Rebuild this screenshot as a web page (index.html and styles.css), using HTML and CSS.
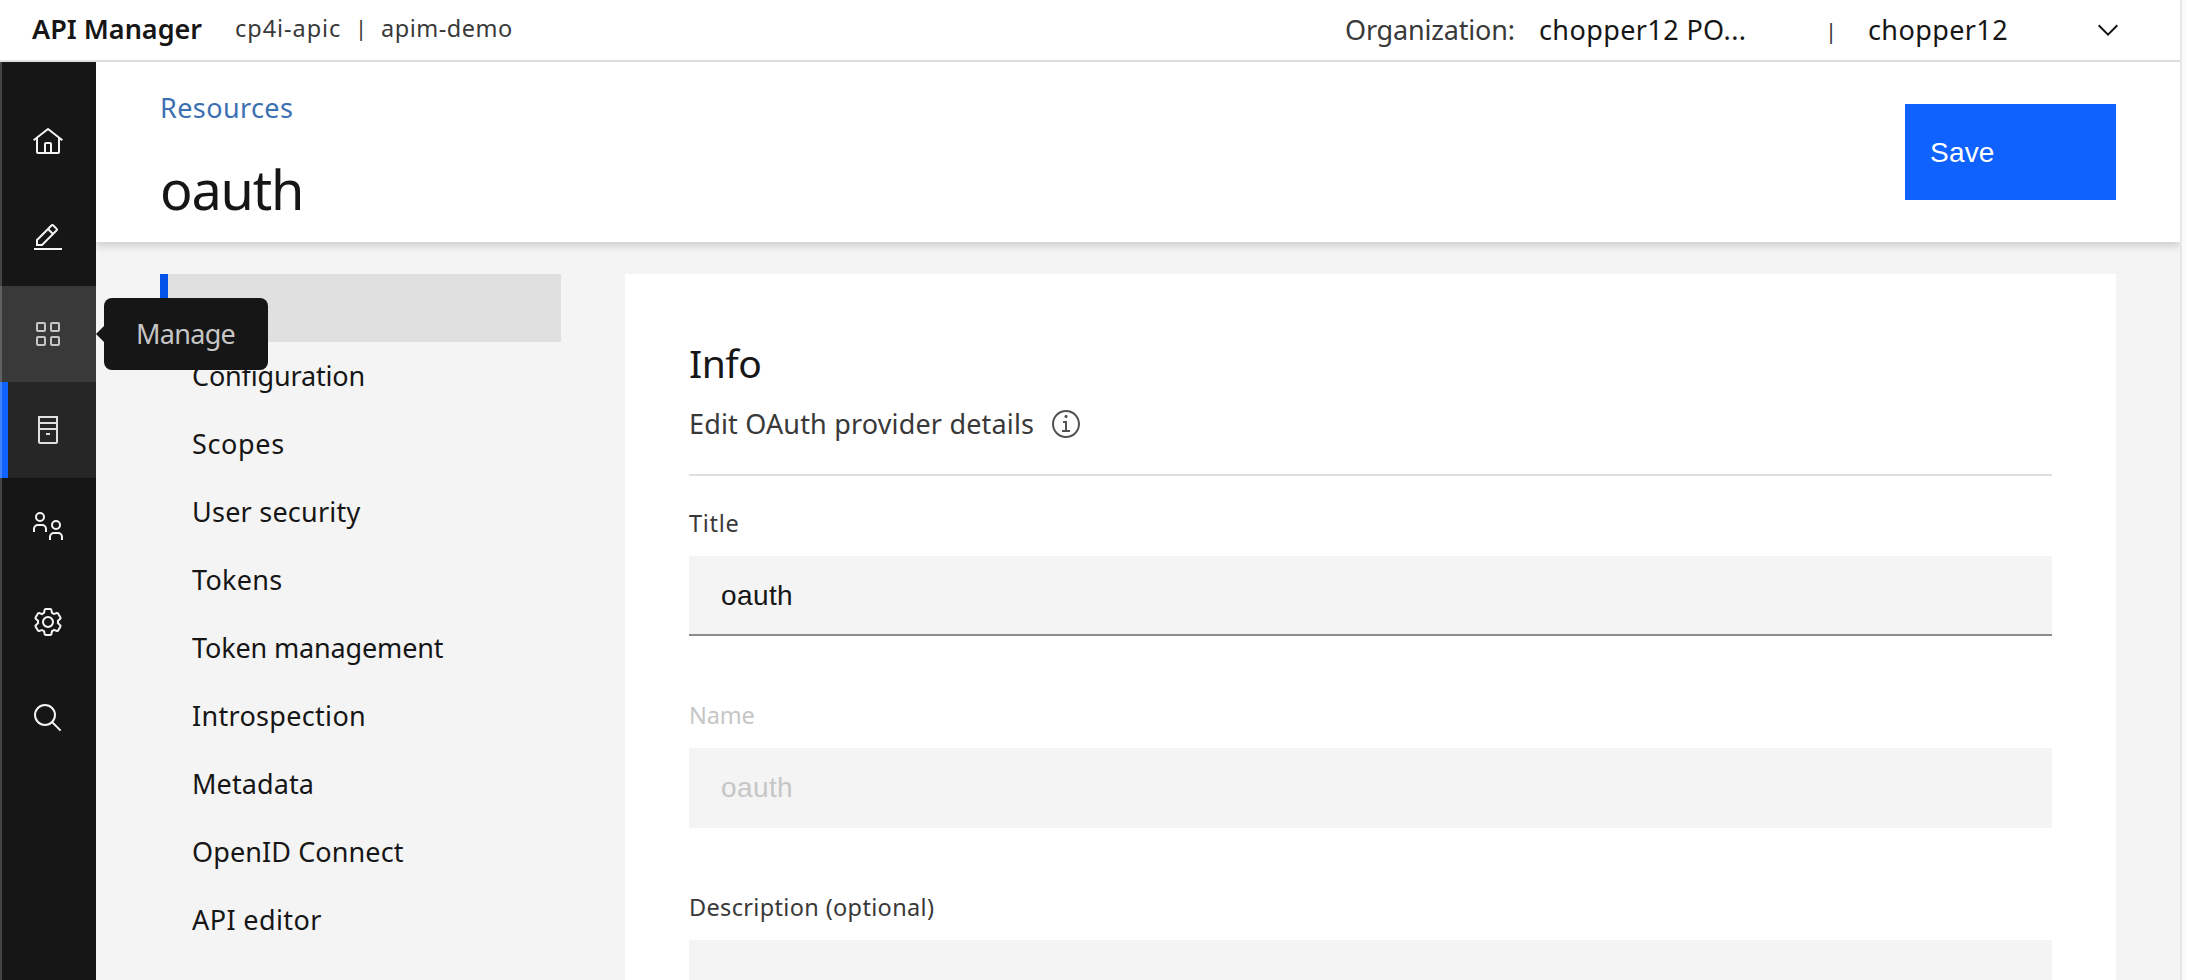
FILE: index.html
```html
<!DOCTYPE html>
<html lang="en">
<head>
<meta charset="utf-8">
<title>API Manager</title>
<link rel="stylesheet" href="styles.css">
</head>
<body>
<div class="window">
  <header class="topbar">
    <div class="product">API Manager</div>
    <div class="crumb instance">cp4i-apic</div>
    <div class="crumb bar">|</div>
    <div class="crumb server">apim-demo</div>
    <div class="account">
      <div class="org-label">Organization:</div>
      <div class="org-name">chopper12 PO...</div>
      <div class="crumb bar account-bar">|</div>
      <div class="user">chopper12</div>
      <svg class="chevron" viewBox="0 0 16 16"><path d="M8 11 3 6 3.7 5.3 8 9.6 12.3 5.3 13 6z"/></svg>
    </div>
  </header>

  <div class="shell">
    <nav class="rail">
      <a class="rail-item"><svg class="icon" viewBox="0 0 32 32"><path d="M16.6123,2.2138a1.01,1.01,0,0,0-1.2427,0L1,13.4194l1.2427,1.5717L4,13.6208V26a2.0041,2.0041,0,0,0,2,2H26a2.0037,2.0037,0,0,0,2-2V13.63L29.7573,15,31,13.4282ZM18,26H14V18h4Zm2,0V18a2.0023,2.0023,0,0,0-2-2H14a2.002,2.002,0,0,0-2,2v8H6V12.0615l10-7.79,10,7.8005V26Z"/></svg></a>
      <a class="rail-item"><svg class="icon" viewBox="0 0 32 32"><path d="M2 26H30V28H2zM25.4 9c.8-.8.8-2 0-2.8l-3.6-3.6c-.8-.8-2-.8-2.8 0L4 17.6V24h6.4L25.4 9zM20.4 4L24 7.6l-3 3L17.4 7 20.4 4zM6 22v-3.6l10-10 3.6 3.6-10 10H6z"/></svg></a>
      <a class="rail-item hovered"><svg class="icon line" viewBox="0 0 32 32"><rect x="5" y="5" width="8" height="8" rx="1"/><rect x="19" y="5" width="8" height="8" rx="1"/><rect x="5" y="19" width="8" height="8" rx="1"/><rect x="19" y="19" width="8" height="8" rx="1"/></svg><span class="tooltip">Manage</span></a>
      <a class="rail-item current"><svg class="icon line" viewBox="0 0 32 32"><path d="M7 3H25V28a1 1 0 0 1-1 1H8a1 1 0 0 1-1-1ZM7 9H25M7 15H25M14 20H18"/></svg></a>
      <a class="rail-item"><svg class="icon line" viewBox="0 0 32 32"><circle cx="8" cy="7" r="4"/><path d="M2 22v-3a4 4 0 0 1 4-4h4a4 4 0 0 1 4 4v3"/><circle cx="24" cy="15" r="4"/><path d="M18 30v-3a4 4 0 0 1 4-4h4a4 4 0 0 1 4 4v3"/></svg></a>
      <a class="rail-item"><svg class="icon" viewBox="0 0 32 32"><path d="M27 16.76c0-.25 0-.5 0-.76s0-.51 0-.77l1.92-1.68A2 2 0 0 0 29.3 11L26.94 7a2 2 0 0 0-1.73-1 2 2 0 0 0-.64.1l-2.43.82a11.35 11.35 0 0 0-1.31-.75l-.51-2.52a2 2 0 0 0-2-1.61H13.64a2 2 0 0 0-2 1.61l-.51 2.52a11.48 11.48 0 0 0-1.32.75L7.43 6.06A2 2 0 0 0 6.79 6 2 2 0 0 0 5.06 7L2.7 11a2 2 0 0 0 .41 2.51L5 15.24c0 .25 0 .5 0 .76s0 .51 0 .77L3.11 18.45A2 2 0 0 0 2.7 21L5.06 25a2 2 0 0 0 1.73 1 2 2 0 0 0 .64-.1l2.43-.82a11.35 11.35 0 0 0 1.31.75l.51 2.52a2 2 0 0 0 2 1.61h4.72a2 2 0 0 0 2-1.61l.51-2.52a11.48 11.48 0 0 0 1.32-.75l2.42.82a2 2 0 0 0 .64.1 2 2 0 0 0 1.73-1L29.3 21a2 2 0 0 0-.41-2.51ZM25.21 24l-3.43-1.16a8.86 8.86 0 0 1-2.71 1.57L18.36 28H13.64l-.71-3.55a9.36 9.36 0 0 1-2.7-1.57L6.79 24 4.43 20l2.72-2.4a8.9 8.9 0 0 1 0-3.13L4.43 12 6.79 8l3.43 1.16a8.86 8.86 0 0 1 2.71-1.57L13.64 4h4.72l.71 3.55a9.36 9.36 0 0 1 2.7 1.57L25.21 8 27.57 12l-2.72 2.4a8.9 8.9 0 0 1 0 3.13L27.57 20Z"/><path d="M16 22a6 6 0 1 1 6-6A5.94 5.94 0 0 1 16 22Zm0-10a3.91 3.91 0 0 0-4 4 3.91 3.91 0 0 0 4 4 3.91 3.91 0 0 0 4-4A3.91 3.91 0 0 0 16 12Z"/></svg></a>
      <a class="rail-item"><svg class="icon line" viewBox="0 0 32 32"><circle cx="13" cy="13" r="10"/><path d="M20.3 20.3 28.6 28.6"/></svg></a>
    </nav>

    <main class="content">
      <div class="page-header">
        <div>
          <a class="back">Resources</a>
          <h1 class="page-title">oauth</h1>
        </div>
        <button class="save">Save</button>
      </div>

      <div class="columns">
        <ul class="sections">
          <li class="selected">Info</li>
          <li class="t-configuration">Configuration</li>
          <li class="t-scopes">Scopes</li>
          <li class="t-user">User security</li>
          <li class="t-tokens">Tokens</li>
          <li class="t-management">Token management</li>
          <li class="t-introspection">Introspection</li>
          <li class="t-metadata">Metadata</li>
          <li class="t-openid">OpenID Connect</li>
          <li class="t-editor">API editor</li>
        </ul>

        <section class="panel">
          <h2 class="panel-title">Info</h2>
          <div class="panel-sub">
            <span>Edit OAuth provider details</span>
            <svg class="info-icon" viewBox="0 0 16 16"><path d="M8.5 11 8.5 6.5 6.5 6.5 6.5 7.5 7.5 7.5 7.5 11 6 11 6 12 10 12 10 11z"/><path d="M8 3.5c-.4 0-.8.3-.8.8S7.6 5 8 5c.4 0 .8-.3.8-.8S8.4 3.5 8 3.5z"/><path d="M8 15c-3.9 0-7-3.1-7-7s3.1-7 7-7 7 3.1 7 7-3.1 7-7 7zM8 2C4.7 2 2 4.7 2 8s2.7 6 6 6 6-2.7 6-6-2.7-6-6-6z"/></svg>
          </div>
          <div class="field first">
            <label class="t-title">Title</label>
            <input class="input" value="oauth">
          </div>
          <div class="field disabled">
            <label class="t-name">Name</label>
            <input class="input" value="oauth" disabled>
          </div>
          <div class="field">
            <label>Description (optional)</label>
            <input class="input">
          </div>
        </section>
      </div>
    </main>
  </div>
</div>
</body>
</html>
```
FILE: styles.css
```css
* {
  box-sizing: border-box;
}

body {
  margin: 0;
  height: 980px;
  overflow: hidden;
  background: #fafafa;
  color: #161616;
  font: 27px/36px "Noto Sans", "Open Sans", sans-serif;
  white-space: nowrap;
}

.window {
  width: 2182px;
  height: 980px;
  display: flex;
  flex-direction: column;
  overflow: hidden;
  border-right: 2px solid #e6e6e6;
}

/* Top bar */
.topbar {
  flex: none;
  height: 62px;
  display: flex;
  align-items: flex-start;
  padding: 0 56px 0 32px;
  background: #fff;
  border-bottom: 2px solid #e0e0e0;
}

.product {
  width: 203px;
  line-height: 57px;
  font-weight: 600;
}

.crumb {
  font-size: 23.5px;
  line-height: 57px;
  color: #393939;
}

.instance {
  width: 110px;
  letter-spacing: 0.95px;
}

.bar {
  width: 32px;
  font-size: 22px;
  line-height: 55px;
  text-align: center;
}

.server {
  margin-left: 4px;
  letter-spacing: 0.5px;
}

.account {
  display: flex;
  margin-left: auto;
  line-height: 59px;
}

.org-label {
  width: 194px;
  color: #393939;
  letter-spacing: -0.18px;
}

.org-name {
  width: 276px;
  letter-spacing: 0.39px;
}

.account-bar {
  line-height: 60px;
}

.user {
  width: 224px;
  margin-left: 21px;
  letter-spacing: 0.39px;
}

.chevron {
  width: 32px;
  height: 32px;
  margin-top: 14px;
  fill: #161616;
}

/* Icon rail */
.shell {
  flex: 1;
  display: flex;
  min-height: 0;
}

.rail {
  position: relative;
  z-index: 2;
  flex: none;
  width: 96px;
  padding-top: 32px;
  background: #161616;
}

.rail::after {
  content: "";
  position: absolute;
  top: 0;
  left: 0;
  width: 2px;
  height: 100%;
  background: rgba(255, 255, 255, 0.2);
}

.rail-item {
  position: relative;
  display: flex;
  align-items: center;
  justify-content: center;
  height: 96px;
  color: #f4f4f4;
}

.rail-item.hovered {
  background: #393939;
  color: #c6c6c6;
}

.rail-item.current {
  background: #262626;
  color: #e0e0e0;
  box-shadow: inset 8px 0 #0f62fe;
}

.icon {
  width: 32px;
  height: 32px;
  fill: currentColor;
}

.icon.line {
  fill: none;
  stroke: currentColor;
  stroke-width: 2;
}

.tooltip {
  position: absolute;
  left: 104px;
  top: 12px;
  width: 164px;
  height: 72px;
  padding-left: 32px;
  border-radius: 8px;
  background: #161616;
  color: #c6c6c6;
  line-height: 71px;
  letter-spacing: -0.7px;
}

.tooltip::before {
  content: "";
  position: absolute;
  left: -8px;
  top: 28px;
  border: solid transparent;
  border-width: 8px 8px 8px 0;
  border-right-color: #161616;
}

/* Page header */
.content {
  flex: 1;
  display: flex;
  flex-direction: column;
  min-width: 0;
  background: #f4f4f4;
}

.page-header {
  position: relative;
  flex: none;
  display: flex;
  justify-content: space-between;
  height: 180px;
  padding: 28px 64px 0;
  background: #fff;
  box-shadow: 0 4px 8px rgba(0, 0, 0, 0.16);
}

.back {
  display: block;
  color: #3d70b2;
  letter-spacing: 0.4px;
}

.page-title {
  margin: 31px 0 0;
  font-size: 54px;
  font-weight: 400;
  line-height: 64px;
  letter-spacing: -1.2px;
}

.save {
  width: 211px;
  height: 96px;
  margin-top: 14px;
  padding: 1px 0 0 25px;
  border: 0;
  background: #0f62fe;
  color: #fff;
  font: 28px/95px "Liberation Sans", Arial, sans-serif;
  letter-spacing: 0.2px;
  text-align: left;
}

/* Section list */
.columns {
  flex: 1;
  display: flex;
  align-items: flex-start;
  gap: 64px;
  padding: 32px 64px 0;
}

.sections {
  flex: none;
  width: 401px;
  margin: 0;
  padding: 0;
  list-style: none;
}

.sections li {
  height: 68px;
  padding-left: 32px;
  line-height: 67px;
}

.sections .selected {
  padding-left: 24px;
  border-left: 8px solid #0353e9;
  background: #e0e0e0;
  line-height: 69px;
}

.t-configuration { letter-spacing: -0.16px; }
.t-scopes { letter-spacing: 0.65px; }
.t-user { letter-spacing: 0.23px; }
.t-tokens { letter-spacing: 0.3px; }
.t-management { letter-spacing: -0.15px; }
.t-introspection { letter-spacing: 0.31px; }
.t-metadata { letter-spacing: 0.1px; }
.t-openid { letter-spacing: 0.1px; }
.t-editor { letter-spacing: 0.4px; }

/* Form panel */
.panel {
  flex: 1;
  height: 760px;
  padding: 63px 64px 0;
  background: #fff;
}

.panel-title {
  margin: 0;
  font-size: 39px;
  font-weight: 400;
  line-height: 52px;
  letter-spacing: -0.5px;
}

.panel-sub {
  display: flex;
  align-items: center;
  gap: 16px;
  height: 87px;
  padding: 0 0 15px;
  border-bottom: 2px solid #e0e0e0;
  color: #393939;
  letter-spacing: 0.17px;
}

.info-icon {
  width: 32px;
  height: 32px;
  fill: #525252;
}

.field {
  display: flex;
  flex-direction: column;
  gap: 17px;
  margin-top: 63px;
  color: #393939;
  font-size: 23.5px;
  line-height: 32px;
  letter-spacing: 0.34px;
}

.field.first {
  margin-top: 31px;
}

.field .t-title { letter-spacing: 0.7px; }
.field .t-name { letter-spacing: -0.17px; }

.input {
  height: 80px;
  padding: 2px 32px 0;
  border: 0;
  border-bottom: 2px solid #8d8d8d;
  border-radius: 0;
  background: #f4f4f4;
  color: #161616;
  font: 28px "Liberation Sans", Arial, sans-serif;
  letter-spacing: 0.4px;
}

.field.disabled,
.field.disabled .input {
  color: #c6c6c6;
}

.field.disabled .input {
  border-bottom-color: transparent;
}
```
